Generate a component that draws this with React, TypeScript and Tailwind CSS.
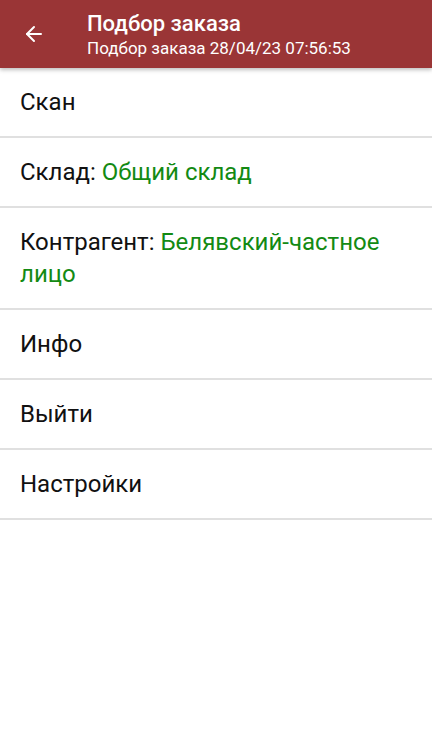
import { ArrowLeft } from "lucide-react";

const rows: { label: string; value?: string }[] = [
  { label: "Скан" },
  { label: "Склад:", value: "Общий склад" },
  { label: "Контрагент:", value: "Белявский-частное лицо" },
  { label: "Инфо" },
  { label: "Выйти" },
  { label: "Настройки" },
];

export default function App() {
  return (
    <div className="w-[432px] h-[740px] bg-white font-['Roboto',sans-serif] overflow-hidden">
      {/* Toolbar */}
      <div className="relative z-10 h-[68px] bg-[#9a3536] flex items-center shadow-[0_2px_4px_rgba(0,0,0,0.25)]">
        <div className="w-[87px] flex pl-[22px]">
          <ArrowLeft size={24} strokeWidth={2} className="text-white" />
        </div>
        <div className="flex flex-col text-white pt-[2px]">
          <span className="text-[22px] leading-[26px] font-medium">Подбор заказа</span>
          <span className="text-[17px] leading-[22px]">Подбор заказа 28/04/23 07:56:53</span>
        </div>
      </div>

      {/* Menu */}
      <div className="flex flex-col">
        {rows.map((row) => (
          <div
            key={row.label}
            className="px-5 py-[18px] border-b-2 border-[#e0e0e0] text-[24px] leading-[32px] text-[#111]"
          >
            {row.label}
            {row.value && <span className="text-[#138a13]"> {row.value}</span>}
          </div>
        ))}
      </div>
    </div>
  );
}
